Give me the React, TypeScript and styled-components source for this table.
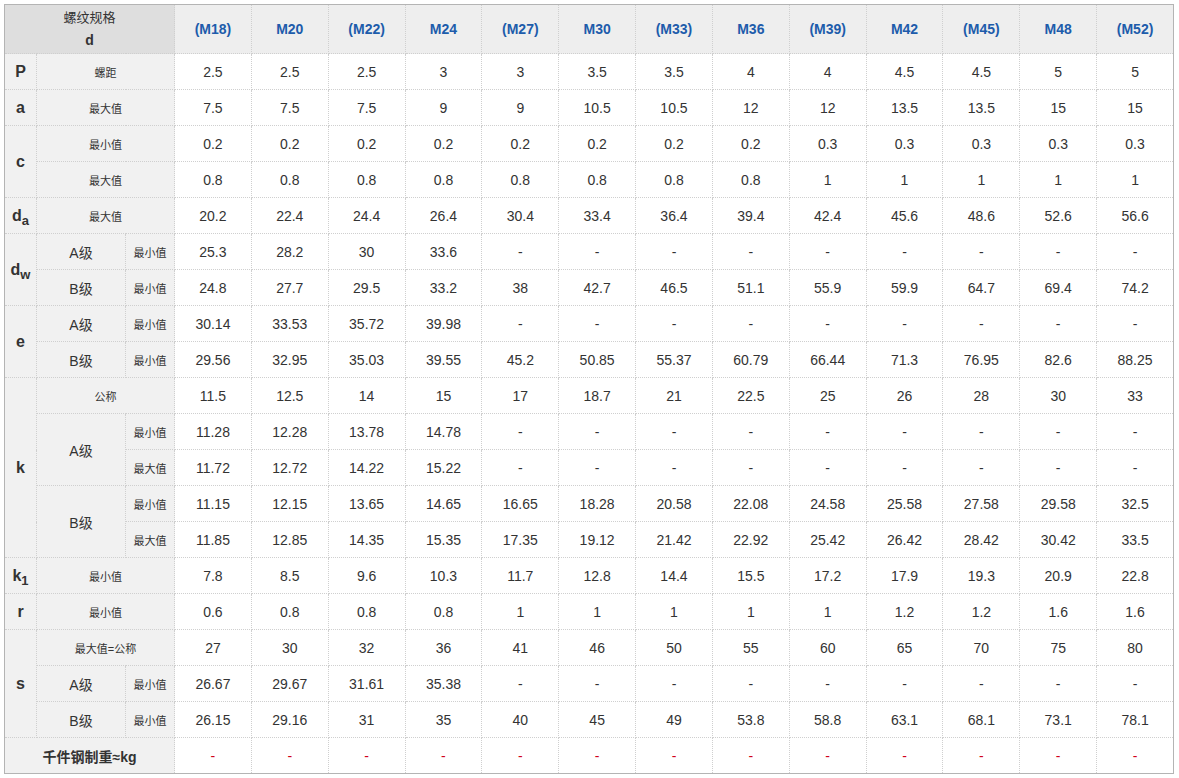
import React from "react";
import styled, { createGlobalStyle } from "styled-components";

const Global = createGlobalStyle`
  html, body { margin: 0; padding: 0; background: #fff; }
  body { font-family: "Liberation Sans", Arial, "Noto Sans CJK SC", sans-serif; color: #333; }
`;

const Page = styled.div`
  padding: 4px 0 0 4px;
`;

const Table = styled.table`
  width: 1170px;
  table-layout: fixed;
  border-collapse: collapse;
  border: 1px solid #b4b4b4;
  font-family: "Liberation Sans", Arial, "Noto Sans CJK SC", sans-serif;
`;

const Cell = styled.td`
  border: 1px dotted #cfcfcf;
  text-align: center;
  vertical-align: middle;
  padding: 0;
  height: 35px;
  font-size: 14px;
  color: #333;
`;

const HeadCorner = styled.th`
  border: 1px dotted #cfcfcf;
  background: #dedede;
  height: 48px;
  font-size: 13px;
  font-weight: normal;
  line-height: 22px;
  color: #333;
  padding: 0;
`;

const HeadD = styled.span`
  display: block;
  font-weight: bold;
  font-size: 14px;
`;

const HeadCell = styled.th`
  border: 1px dotted #cfcfcf;
  background: #eeeeee;
  color: #1d5cab;
  font-size: 14px;
  font-weight: bold;
  padding: 0;
`;

const SymbolCell = styled(Cell)`
  background: #f1f1f1;
  font-size: 16px;
  font-weight: bold;
  color: #333;
  sub {
    font-size: 13px;
    vertical-align: -4px;
    line-height: 0;
  }
`;

const LabelCell = styled(Cell)<{ $small?: boolean; $bold?: boolean }>`
  background: #f1f1f1;
  font-size: ${(p) => (p.$small ? "11px" : "14px")};
  font-weight: ${(p) => (p.$bold ? "bold" : "normal")};
  color: #333;
`;

const ValueCell = styled(Cell)<{ $red?: boolean }>`
  background: #fff;
  color: ${(p) => (p.$red ? "#d0021b" : "#333")};
`;

const sizes = ["(M18)", "M20", "(M22)", "M24", "(M27)", "M30", "(M33)", "M36", "(M39)", "M42", "(M45)", "M48", "(M52)"];

const dash9 = Array(9).fill("-");

const Values: React.FC<{ vals: (string | number)[]; red?: boolean }> = ({ vals, red }) => (
  <>
    {vals.map((v, i) => (
      <ValueCell key={i} $red={red}>
        {v}
      </ValueCell>
    ))}
  </>
);

export default function App() {
  return (
    <Page>
      <Global />
      <Table>
        <colgroup>
          <col style={{ width: 32 }} />
          <col style={{ width: 89 }} />
          <col style={{ width: 49 }} />
          {sizes.map((s) => (
            <col key={s} />
          ))}
        </colgroup>
        <thead>
          <tr>
            <HeadCorner colSpan={3}>
              螺纹规格
              <HeadD>d</HeadD>
            </HeadCorner>
            {sizes.map((s) => (
              <HeadCell key={s}>{s}</HeadCell>
            ))}
          </tr>
        </thead>
        <tbody>
          <tr>
            <SymbolCell>P</SymbolCell>
            <LabelCell colSpan={2} $small>螺距</LabelCell>
            <Values vals={[2.5, 2.5, 2.5, 3, 3, 3.5, 3.5, 4, 4, 4.5, 4.5, 5, 5]} />
          </tr>
          <tr>
            <SymbolCell>a</SymbolCell>
            <LabelCell colSpan={2} $small>最大值</LabelCell>
            <Values vals={[7.5, 7.5, 7.5, 9, 9, 10.5, 10.5, 12, 12, 13.5, 13.5, 15, 15]} />
          </tr>
          <tr>
            <SymbolCell rowSpan={2}>c</SymbolCell>
            <LabelCell colSpan={2} $small>最小值</LabelCell>
            <Values vals={["0.2", "0.2", "0.2", "0.2", "0.2", "0.2", "0.2", "0.2", "0.3", "0.3", "0.3", "0.3", "0.3"]} />
          </tr>
          <tr>
            <LabelCell colSpan={2} $small>最大值</LabelCell>
            <Values vals={["0.8", "0.8", "0.8", "0.8", "0.8", "0.8", "0.8", "0.8", 1, 1, 1, 1, 1]} />
          </tr>
          <tr>
            <SymbolCell>
              d<sub>a</sub>
            </SymbolCell>
            <LabelCell colSpan={2} $small>最大值</LabelCell>
            <Values vals={["20.2", "22.4", "24.4", "26.4", "30.4", "33.4", "36.4", "39.4", "42.4", "45.6", "48.6", "52.6", "56.6"]} />
          </tr>
          <tr>
            <SymbolCell rowSpan={2}>
              d<sub>w</sub>
            </SymbolCell>
            <LabelCell>A级</LabelCell>
            <LabelCell $small>最小值</LabelCell>
            <Values vals={["25.3", "28.2", "30", "33.6", ...dash9]} />
          </tr>
          <tr>
            <LabelCell>B级</LabelCell>
            <LabelCell $small>最小值</LabelCell>
            <Values vals={["24.8", "27.7", "29.5", "33.2", "38", "42.7", "46.5", "51.1", "55.9", "59.9", "64.7", "69.4", "74.2"]} />
          </tr>
          <tr>
            <SymbolCell rowSpan={2}>e</SymbolCell>
            <LabelCell>A级</LabelCell>
            <LabelCell $small>最小值</LabelCell>
            <Values vals={["30.14", "33.53", "35.72", "39.98", ...dash9]} />
          </tr>
          <tr>
            <LabelCell>B级</LabelCell>
            <LabelCell $small>最小值</LabelCell>
            <Values vals={["29.56", "32.95", "35.03", "39.55", "45.2", "50.85", "55.37", "60.79", "66.44", "71.3", "76.95", "82.6", "88.25"]} />
          </tr>
          <tr>
            <SymbolCell rowSpan={5}>k</SymbolCell>
            <LabelCell colSpan={2} $small>公称</LabelCell>
            <Values vals={["11.5", "12.5", "14", "15", "17", "18.7", "21", "22.5", "25", "26", "28", "30", "33"]} />
          </tr>
          <tr>
            <LabelCell rowSpan={2}>A级</LabelCell>
            <LabelCell $small>最小值</LabelCell>
            <Values vals={["11.28", "12.28", "13.78", "14.78", ...dash9]} />
          </tr>
          <tr>
            <LabelCell $small>最大值</LabelCell>
            <Values vals={["11.72", "12.72", "14.22", "15.22", ...dash9]} />
          </tr>
          <tr>
            <LabelCell rowSpan={2}>B级</LabelCell>
            <LabelCell $small>最小值</LabelCell>
            <Values vals={["11.15", "12.15", "13.65", "14.65", "16.65", "18.28", "20.58", "22.08", "24.58", "25.58", "27.58", "29.58", "32.5"]} />
          </tr>
          <tr>
            <LabelCell $small>最大值</LabelCell>
            <Values vals={["11.85", "12.85", "14.35", "15.35", "17.35", "19.12", "21.42", "22.92", "25.42", "26.42", "28.42", "30.42", "33.5"]} />
          </tr>
          <tr>
            <SymbolCell>
              k<sub>1</sub>
            </SymbolCell>
            <LabelCell colSpan={2} $small>最小值</LabelCell>
            <Values vals={["7.8", "8.5", "9.6", "10.3", "11.7", "12.8", "14.4", "15.5", "17.2", "17.9", "19.3", "20.9", "22.8"]} />
          </tr>
          <tr>
            <SymbolCell>r</SymbolCell>
            <LabelCell colSpan={2} $small>最小值</LabelCell>
            <Values vals={["0.6", "0.8", "0.8", "0.8", "1", "1", "1", "1", "1", "1.2", "1.2", "1.6", "1.6"]} />
          </tr>
          <tr>
            <SymbolCell rowSpan={3}>s</SymbolCell>
            <LabelCell colSpan={2} $small>最大值=公称</LabelCell>
            <Values vals={["27", "30", "32", "36", "41", "46", "50", "55", "60", "65", "70", "75", "80"]} />
          </tr>
          <tr>
            <LabelCell>A级</LabelCell>
            <LabelCell $small>最小值</LabelCell>
            <Values vals={["26.67", "29.67", "31.61", "35.38", ...dash9]} />
          </tr>
          <tr>
            <LabelCell>B级</LabelCell>
            <LabelCell $small>最小值</LabelCell>
            <Values vals={["26.15", "29.16", "31", "35", "40", "45", "49", "53.8", "58.8", "63.1", "68.1", "73.1", "78.1"]} />
          </tr>
          <tr>
            <LabelCell colSpan={3} $bold>千件钢制重≈kg</LabelCell>
            <Values vals={Array(13).fill("-")} red />
          </tr>
        </tbody>
      </Table>
    </Page>
  );
}
